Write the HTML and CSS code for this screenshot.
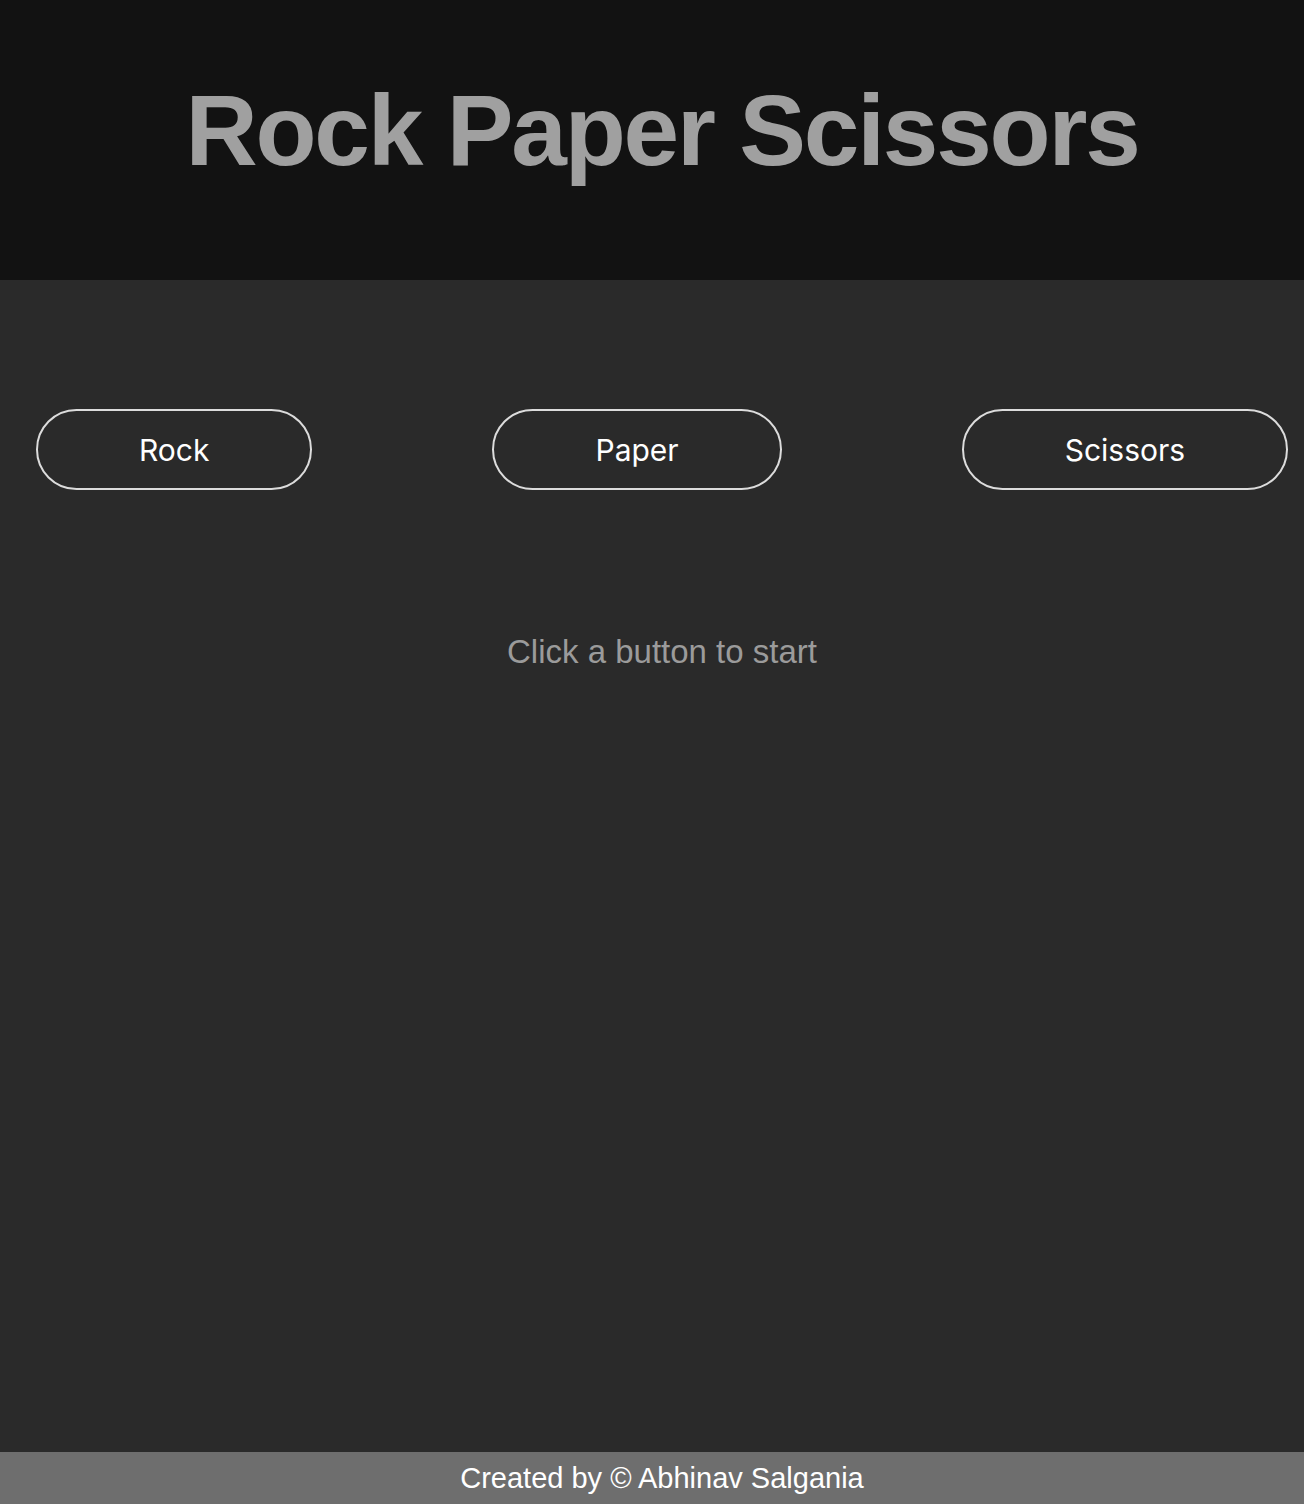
FILE: index.html
```html
<!DOCTYPE html>
<html lang="en">
<head>
<meta charset="utf-8">
<title>Rock Paper Scissors</title>
<link rel="stylesheet" href="styles.css">
</head>
<body>
<header class="site-header">
  <h1 class="title">Rock Paper Scissors</h1>
</header>
<main class="game">
  <div class="choices">
    <button class="choice">Rock</button>
    <button class="choice">Paper</button>
    <button class="choice">Scissors</button>
  </div>
  <p class="status">Click a button to start</p>
</main>
<footer class="site-footer">Created by © Abhinav Salgania</footer>
</body>
</html>
```
FILE: styles.css
```css
* { box-sizing: border-box; }
html, body { margin: 0; padding: 0; }
body {
  min-height: 100vh;
  display: flex;
  flex-direction: column;
  background: #2a2a2a;
  font-family: "Liberation Sans", Arial, sans-serif;
}
.site-header {
  background: #121212;
  height: 280px;
  padding: 73px 0 0 20px;
  text-align: center;
}
.title {
  margin: 0;
  font-size: 100px;
  font-weight: 700;
  letter-spacing: -2.2px;
  color: #a0a0a0;
  line-height: 115px;
}
.game {
  flex: 1;
  background: #2a2a2a;
  padding-top: 129px;
}
.choices {
  display: flex;
  gap: 180px;
  padding-left: 36px;
}
.choice {
  height: 81px;
  padding: 0 101px;
  border: 2px solid #dcdcdc;
  border-radius: 41px;
  background: transparent;
  color: #ffffff;
  font-family: Inter, "Noto Sans", sans-serif;
  font-size: 30px;
  font-weight: 400;
}
.status {
  margin: 143px 0 0;
  padding-left: 20px;
  text-align: center;
  font-size: 33px;
  line-height: 38px;
  color: #9b9b9b;
}
.site-footer {
  height: 52px;
  background: #6e6e6e;
  color: #ffffff;
  font-size: 29px;
  line-height: 52px;
  text-align: center;
  padding-left: 20px;
}
```
